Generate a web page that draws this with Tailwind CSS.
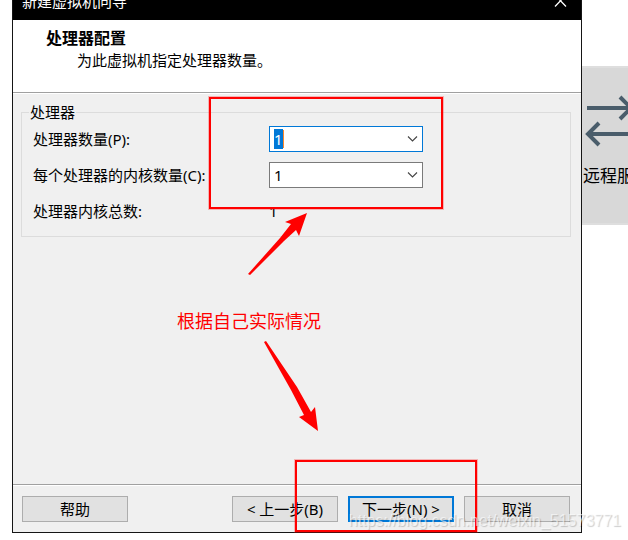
<!DOCTYPE html>
<html lang="zh-CN">
<head>
    <meta charset="UTF-8">
    <meta name="viewport" content="width=device-width, initial-scale=1.0">
    <title>新建虚拟机向导</title>
    <script src="https://cdn.jsdelivr.net/npm/@tailwindcss/browser@4"></script>
    <style>
        body { font-family: 'Noto Sans', 'Noto Sans CJK SC', sans-serif; }
    </style>
</head>
<body class="relative flex min-h-screen overflow-hidden bg-white pl-3 text-[15px] leading-5 text-black">
    <!-- Wizard dialog -->
    <main class="relative mb-[7px] flex min-w-0 flex-1 flex-col border-x border-b border-[#151515] bg-[#f0f0f0]">
        <div class="flex h-5 items-end justify-between overflow-hidden bg-black pr-[14px] pb-[9px] pl-[9px] text-white">
            <span class="shrink-0">新建虚拟机向导</span>
            <button type="button" aria-label="关闭" class="shrink-0">
                <svg class="block h-[13px] w-[13px]" viewBox="0 0 13 13" fill="none" stroke="white" stroke-width="1.3"><path d="M1 -3L12 8.500M12 -3L1 8.500"/></svg>
            </button>
        </div>

        <header class="border-b border-[#a0a0a0] bg-white pt-2 pb-[22px] pl-[33px]">
            <h1 class="text-base leading-5 font-bold">处理器配置</h1>
            <p class="mt-[2px] pl-[31px]">为此虚拟机指定处理器数量。</p>
        </header>

        <!-- Processor settings -->
        <section class="flex-1 border-t border-white pt-[8px] pr-[10px] pl-[8px]">
            <fieldset class="border border-[#dcdcdc] px-[11px] pb-[12px]">
                <legend class="-ml-1 px-[1px]">处理器</legend>
                <div class="mt-1 grid grid-cols-[236px_154px] gap-y-[10px]">
                    <label for="cpuCount" class="leading-[26px]">处理器数量(P):</label>
                    <div class="relative flex h-[26px] items-center border border-[#0078d7] bg-white pl-[4px]">
                        <input id="cpuCount" type="text" value="1" class="min-w-0 flex-1 text-[15px] leading-5 caret-transparent outline-none selection:bg-[#0078d7] selection:text-white">
                        <span class="absolute top-[3px] left-[13px] h-[18px] w-px bg-[#ff8728]"></span>
                        <button type="button" aria-label="展开" class="mr-[4px]">
                            <svg class="block h-[6px] w-[11px]" viewBox="0 0 11 6" fill="none" stroke="#444" stroke-width="1.1"><path d="M1 .5L5.500 5L10 .5"/></svg>
                        </button>
                    </div>

                    <label for="coreCount" class="leading-[26px] whitespace-nowrap">每个处理器的内核数量(C):</label>
                    <div class="relative h-[26px] border border-[#7a7a7a] bg-white">
                        <select id="coreCount" class="block h-full w-full appearance-none pl-[4px] outline-none">
                            <option>1</option>
                            <option>2</option>
                            <option>4</option>
                        </select>
                        <svg class="pointer-events-none absolute top-[9px] right-[4px] h-[6px] w-[11px]" viewBox="0 0 11 6" fill="none" stroke="#444" stroke-width="1.1"><path d="M1 .5L5.500 5L10 .5"/></svg>
                    </div>

                    <span class="leading-[26px]">处理器内核总数:</span>
                    <output for="cpuCount coreCount" class="leading-[26px]">1</output>
                </div>
            </fieldset>
        </section>

        <!-- Wizard buttons -->
        <footer class="border-t border-[#a0a0a0]">
            <div class="flex gap-[10px] border-t border-white px-[9px] py-[10px]">
                <button type="button" class="mr-auto h-[26px] w-[106px] border border-[#adadad] bg-[#e1e1e1]">帮助</button>
                <button type="button" class="h-[26px] w-[106px] border border-[#adadad] bg-[#e1e1e1]">&lt; 上一步(B)</button>
                <button type="button" class="h-[26px] w-[106px] border-2 border-[#0078d7] bg-[#e1e1e1]">下一步(N) &gt;</button>
                <button type="button" class="mr-[2px] h-[26px] w-[106px] border border-[#adadad] bg-[#e1e1e1]">取消</button>
            </div>
        </footer>
    </main>

    <!-- Window behind the dialog -->
    <aside class="w-[46px] shrink-0 overflow-hidden pt-[66px]">
        <div class="h-[159px] border-y-2 border-[#dedede] bg-[#d8d8d8] pt-[26px]">
            <svg class="block h-[54px] w-[46px]" viewBox="0 0 46 54" fill="none" stroke="#4a5d6b" stroke-width="4"><path d="M5 14H48M38 3L49 14L38 25M46 40H6M17 29L6 40L17 51"/></svg>
            <p class="mt-[16px] pl-px text-[17px] leading-6 whitespace-nowrap">远程服务器</p>
        </div>
    </aside>

    <!-- Annotations -->
    <div class="pointer-events-none absolute top-[97px] left-[209px] h-[112px] w-[234px] border-2 border-[#ff0000] ring-1 ring-[#ff0000]/25"></div>
    <div class="pointer-events-none absolute top-[460px] left-[295px] h-[72px] w-[182px] border-2 border-[#ff0000] ring-1 ring-[#ff0000]/25"></div>
    <svg class="pointer-events-none absolute top-[210px] left-[240px] h-[224px] w-[90px]" viewBox="240 210 90 224" fill="#ff0000">
        <path d="M248 274L280 238L291 224L285 222L307 213L299 236L296 230L284 241L250 275Z"/>
        <path d="M264 342L266 341L297 387L311 412L315 407L318 431L299 417L304 415L291 390Z"/>
    </svg>
    <p class="pointer-events-none absolute top-[309px] left-[177px] text-lg leading-6 whitespace-nowrap text-[#ff0000]">根据自己实际情况</p>
    <p class="pointer-events-none absolute right-[7px] bottom-[9px] font-['Liberation_Sans'] text-base leading-5 text-white/60 [text-shadow:1px_1px_1px_rgba(0,0,0,0.2)]">https://blog.csdn.net/weixin_51573771</p>

    <script>
        // Start with the processor count selected
        const cpuCount = document.getElementById('cpuCount');
        cpuCount.focus();
        cpuCount.select();
    </script>
</body>
</html>
